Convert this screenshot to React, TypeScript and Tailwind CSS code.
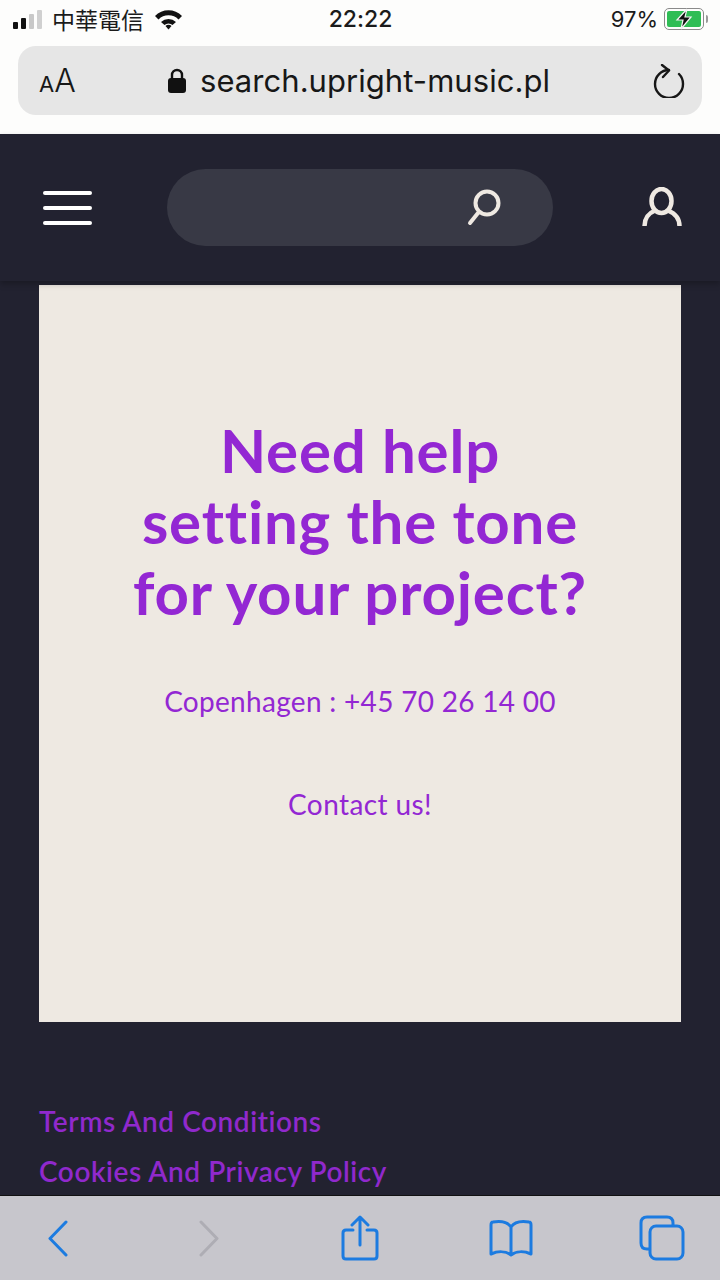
const blue = '#1c7be0'

function StatusBar() {
  return (
    <div className="flex h-[38px] items-center justify-between pl-[13px] pr-[12px] text-[#1b1b1b]">
      <div className="flex w-[250px] items-center">
        <div className="flex h-[20px] items-end gap-[3px]">
          <div className="h-[7px] w-[5px] rounded-[1px] bg-[#111]" />
          <div className="h-[11px] w-[5px] rounded-[1px] bg-[#111]" />
          <div className="h-[15px] w-[5px] rounded-[1px] bg-[#c8c8c8]" />
          <div className="h-[19px] w-[5px] rounded-[1px] bg-[#d0d0d0]" />
        </div>
        <span className="ml-[10px] font-['Noto_Sans_CJK_TC',sans-serif] text-[23px] leading-none">中華電信</span>
        <svg className="ml-[10px]" width="29" height="22" viewBox="0 0 29 22">
          <path d="M1 8 A19 19 0 0 1 28 8 L24.5 11.5 A14 14 0 0 0 4.5 11.5 Z" fill="#111" />
          <path d="M7 14 A11 11 0 0 1 22 14 L18.5 17 A6 6 0 0 0 10.5 17 Z" fill="#111" />
          <path d="M11.5 18 A4 4 0 0 1 17.5 18 L14.5 21.5 Z" fill="#111" />
        </svg>
      </div>
      <span className="font-['Inter',sans-serif] text-[23px] font-medium leading-none">22:22</span>
      <div className="flex w-[250px] items-center justify-end">
        <span className="font-['Inter',sans-serif] text-[22px] leading-none">97%</span>
        <div className="relative ml-[6px] flex h-[22px] w-[40px] items-center rounded-[5px] border border-[#8a8a8a] p-[2px]">
          <div className="h-full w-[36px] rounded-[2px] bg-[#2fbd55]" />
          <svg className="absolute left-[8px] top-[-1px]" width="22" height="22" viewBox="0 0 22 22">
            <path d="M14 1 L4 12 H10 L8 21 L18 9 H12 Z" fill="#111" stroke="#f4f4f4" strokeWidth="1.2" />
          </svg>
        </div>
        <div className="ml-[2px] h-[8px] w-[2px] rounded-r-[2px] bg-[#9a9a9a]" />
      </div>
    </div>
  )
}

function AddressBar() {
  return (
    <div className="mx-[18px] mt-[8px] flex h-[69px] items-center rounded-[18px] bg-[#e6e6e6] pl-[21px] pr-[17px] text-[#171717]">
      <div className="flex w-[129px] items-baseline font-['Inter',sans-serif]">
        <span className="text-[22px] leading-none">A</span>
        <span className="text-[32px] font-light leading-none">A</span>
      </div>
      <svg className="shrink-0" width="18" height="25" viewBox="0 0 18 25">
        <path d="M4 11 V7 A5 5 0 0 1 14 7 V11" fill="none" stroke="#111" strokeWidth="2.4" />
        <rect x="0" y="10" width="18" height="15" rx="3" fill="#111" />
      </svg>
      <span className="ml-[14px] flex-1 font-['Inter',sans-serif] text-[31px] leading-none tracking-[0.05px]">search.upright-music.pl</span>
      <svg width="32" height="34" viewBox="0 0 32 34" fill="none" stroke="#171717" strokeWidth="2.4" strokeLinecap="round" strokeLinejoin="round">
        <path d="M16 6 A14 14 0 1 0 30 20 A14 14 0 0 0 26 10" />
        <path d="M9 1 L16 6.5 L10 13" />
      </svg>
    </div>
  )
}

function Header() {
  return (
    <header className="relative z-10 flex h-[147px] items-center bg-[#222230] pl-[43px] pr-[38px] shadow-[0_3px_6px_rgba(0,0,0,0.25)]">
      <div className="flex w-[49px] flex-col gap-[11px]">
        <div className="h-[4px] rounded-full bg-white" />
        <div className="h-[4px] rounded-full bg-white" />
        <div className="h-[4px] rounded-full bg-white" />
      </div>
      <div className="mb-[1px] ml-[75px] flex h-[77px] w-[386px] items-center justify-end rounded-full bg-[#383945] pr-[51px]">
        <svg width="36" height="38" viewBox="0 0 36 38" fill="none" stroke="#efe9e2">
          <circle cx="21" cy="15" r="11.5" strokeWidth="4" />
          <path d="M12 25 L4 35" strokeWidth="4" strokeLinecap="round" />
        </svg>
      </div>
      <svg className="ml-auto mb-[1px]" width="40" height="40" viewBox="0 0 40 40" fill="none" stroke="#efe9e2" strokeWidth="4.5">
        <ellipse cx="19.5" cy="14" rx="10" ry="12" />
        <path d="M2.5 39 C2.5 30 7 26 13 23.5 M37.5 39 C37.5 30 32 26 26 23.5" />
      </svg>
    </header>
  )
}

function BottomBar() {
  return (
    <div className="flex h-[85px] shrink-0 items-center border-t border-[#111] bg-[#c7c6cc] pl-[47px]">
      <svg width="22" height="37" viewBox="0 0 22 37" fill="none" stroke={blue} strokeWidth="3" strokeLinecap="round" strokeLinejoin="round">
        <path d="M19 2 L3 18.5 L19 35" />
      </svg>
      <svg className="ml-[129px]" width="22" height="37" viewBox="0 0 22 37" fill="none" stroke="#aeadb4" strokeWidth="3" strokeLinecap="round" strokeLinejoin="round">
        <path d="M3 2 L19 18.5 L3 35" />
      </svg>
      <svg className="ml-[121px]" width="38" height="46" viewBox="0 0 38 46" fill="none" stroke={blue} strokeWidth="3" strokeLinecap="round" strokeLinejoin="round">
        <path d="M12 15 H5 Q2 15 2 18 V41 Q2 44 5 44 H33 Q36 44 36 41 V18 Q36 15 33 15 H26" />
        <path d="M19 30 V3 M11 10 L19 2 L27 10" />
      </svg>
      <svg className="ml-[110px]" width="44" height="38" viewBox="0 0 44 38" fill="none" stroke={blue} strokeWidth="3" strokeLinecap="round" strokeLinejoin="round">
        <path d="M22 8 C18 2 10 2 4 3 Q2 3 2 6 V35 C9 32 17 32 22 36 C27 32 35 32 42 35 V6 Q42 3 40 3 C34 2 26 2 22 8 Z M22 8 V36" />
      </svg>
      <svg className="ml-[106px]" width="46" height="46" viewBox="0 0 46 46" fill="none" stroke={blue} strokeWidth="3" strokeLinejoin="round">
        <rect x="11" y="11" width="33" height="33" rx="6" />
        <path d="M11 34 H8 Q2 34 2 28 V8 Q2 2 8 2 H28 Q34 2 34 8 V11" />
      </svg>
    </div>
  )
}

export default function App() {
  return (
    <div className="flex h-[1280px] w-[720px] flex-col overflow-hidden bg-[#222230] font-['Lato',sans-serif] [font-variant-ligatures:none]">
      <div className="h-[134px] shrink-0 bg-[#fdfdfc]">
        <StatusBar />
        <AddressBar />
      </div>
      <Header />
      <main className="min-h-0 flex-1 overflow-hidden px-[39px] pt-[4px]">
        <section className="flex h-[737px] flex-col items-center bg-[#eee9e2] pt-[130px] text-center text-[#9327d3]">
          <h1 className="text-[60px] font-bold leading-[71px] tracking-[0.8px]">
            Need help
            <br />
            setting the tone
            <br />
            for your project?
          </h1>
          <p className="mt-[56px] text-[28px] leading-[34px] tracking-[0.3px]">Copenhagen : +45 70 26 14 00</p>
          <p className="mt-[69px] text-[28px] leading-[34px] tracking-[0.4px]">Contact us!</p>
        </section>
        <footer className="mt-[82px] flex flex-col gap-[15px] text-[28px] font-semibold leading-[35px] tracking-[0.55px] text-[#9029cc]">
          <a>Terms And Conditions</a>
          <a>Cookies And Privacy Policy</a>
        </footer>
      </main>
      <BottomBar />
    </div>
  )
}
